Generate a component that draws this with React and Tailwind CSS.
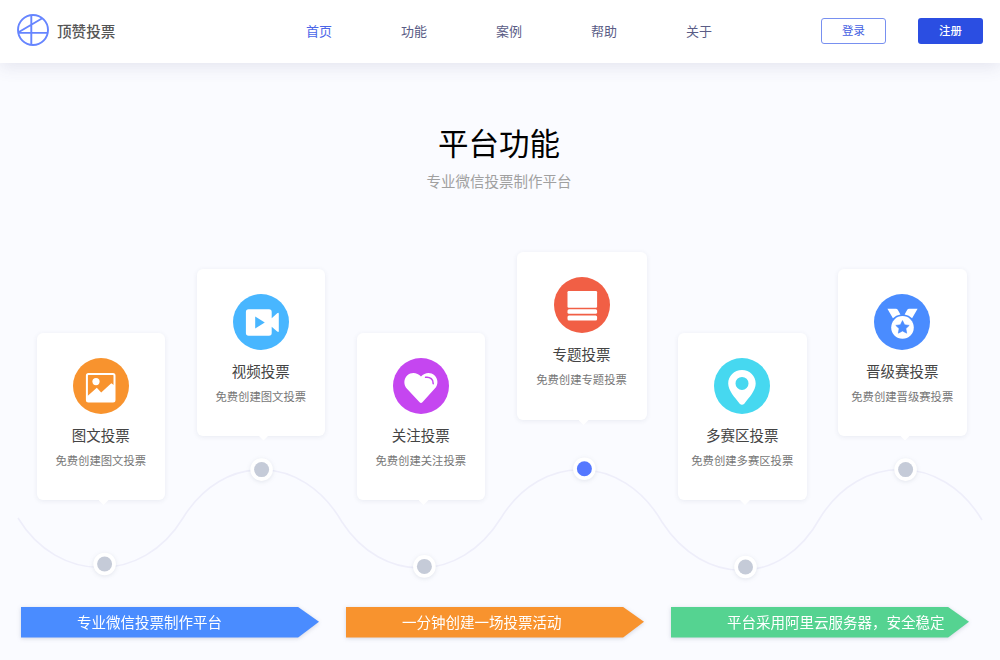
import React from 'react';

const navItems = ['首页', '功能', '案例', '帮助', '关于'];

const ImageIcon = () => (
  <g>
    <rect x="13.9" y="16" width="27.6" height="27.4" rx="1.5" fill="none" stroke="#fff" strokeWidth="2" />
    <circle cx="23" cy="23.6" r="3.6" fill="#fff" />
    <path d="M14 38.5 L23.8 29.8 L28.2 34.6 L38.3 25.3 L41.5 27.5 V43.4 H14 Z" fill="#fff" />
  </g>
);

const VideoIcon = () => (
  <g fill="#fff">
    <path fillRule="evenodd" d="M15.6 15.3 H36 Q38.7 15.3 38.7 18 V24.3 L44.2 19.2 Q45.8 18.2 45.8 20 V37 Q45.8 38.8 44.2 37.6 L38.7 32.8 V39 Q38.7 41.7 36 41.7 H15.6 Q12.9 41.7 12.9 39 V18 Q12.9 15.3 15.6 15.3 Z M22.2 22.6 V34.6 L31.8 28.6 Z" />
  </g>
);

const HeartIcon = () => (
  <g>
    <path d="M28 18.6 C31.6 14.2 37.6 13.8 41.4 17.2 C45.4 21 45.4 26.8 41.8 30.6 L29.4 44.2 Q28 45.8 26.6 44.2 L14.2 31 C10.4 27 10.4 21 14.4 17.2 C18.2 13.8 24.4 14.2 28 18.6 Z" fill="#fff" />
    <path d="M32.6 19.3 C37 18.6 40.6 21.4 40.2 25.6" fill="none" stroke="#c546f0" strokeWidth="1.6" strokeLinecap="round" />
  </g>
);

const TopicIcon = () => (
  <g fill="#fff">
    <rect x="13.5" y="14" width="29.6" height="16.8" rx="1.2" />
    <rect x="13.5" y="32.2" width="29.6" height="4.6" rx="1.5" />
    <rect x="13.5" y="38.6" width="29.6" height="4.8" rx="1.5" />
  </g>
);

const PinIcon = () => (
  <path
    fill="#fff"
    fillRule="evenodd"
    d="M28 12 C35.8 12 41.7 18 41.7 25.6 C41.7 32.6 35.2 39.6 30.3 45.7 Q28 48 25.7 45.7 C20.8 39.6 14.2 32.6 14.2 25.6 C14.2 18 20.2 12 28 12 Z M28 18.9 A6.5 6.5 0 1 0 28 31.9 A6.5 6.5 0 1 0 28 18.9 Z"
  />
);

const MedalIcon = () => (
  <g>
    <path d="M13.4 14.8 H21.8 Q23.2 14.8 23.9 16 L26.4 20.4 Q22 21.2 18.9 24.2 Z" fill="#fff" />
    <path d="M43.6 14.8 H35.2 Q33.8 14.8 33.1 16 L30.6 20.4 Q35 21.2 38.1 24.2 Z" fill="#fff" />
    <circle cx="28.5" cy="33.4" r="11.3" fill="#fff" />
    <path d="M28.5 26.6 L30.6 30.8 L35.2 31.4 L31.9 34.6 L32.7 39.2 L28.5 37 L24.3 39.2 L25.1 34.6 L21.8 31.4 L26.4 30.8 Z" fill="#4a8cff" stroke="#4a8cff" strokeWidth=".6" strokeLinejoin="round" />
  </g>
);

const features = [
  { title: '图文投票', desc: '免费创建图文投票', color: '#f8932e', icon: ImageIcon, box: 'mt-[81px] h-[167px] w-[128.5px]' },
  { title: '视频投票', desc: '免费创建图文投票', color: '#48b6ff', icon: VideoIcon, box: 'mt-[16.5px] h-[167px] w-[128.5px]' },
  { title: '关注投票', desc: '免费创建关注投票', color: '#c546f0', icon: HeartIcon, box: 'mt-[81px] h-[167px] w-[128.5px]' },
  { title: '专题投票', desc: '免费创建专题投票', color: '#f15f45', icon: TopicIcon, box: 'h-[168px] w-[130px]' },
  { title: '多赛区投票', desc: '免费创建多赛区投票', color: '#46d8f0', icon: PinIcon, box: 'mt-[81px] h-[167px] w-[128.5px]' },
  { title: '晋级赛投票', desc: '免费创建晋级赛投票', color: '#4a8cff', icon: MedalIcon, box: 'mt-[16.5px] h-[167px] w-[128.5px]' }
];

// dot centres on the wave, relative to the timeline area
const dots = [
  { x: 104.6, y: 312 },
  { x: 261.6, y: 217.6 },
  { x: 424.4, y: 314.4 },
  { x: 584.4, y: 216.8, active: true },
  { x: 745.5, y: 315 },
  { x: 905.6, y: 217.6 }
];

const banners = [
  { text: '专业微信投票制作平台', color: 'bg-[#4a8cff]' },
  { text: '一分钟创建一场投票活动', color: 'bg-[#f8932e]' },
  { text: '平台采用阿里云服务器，安全稳定', color: 'bg-[#55d391]' }
];

const Logo = () => (
  <div className="mb-1 flex w-[254.5px] items-center">
    <svg width="33" height="34" viewBox="0 0 33 34" fill="none" stroke="#6685ff" strokeWidth="1.9">
      <circle cx="16" cy="17" r="15" />
      <path d="M14.3 2 V32 M1.5 19.9 H31 M1.5 19.2 L25.3 5.2" />
    </svg>
    <span className="ml-[7px] mt-0.5 text-[14.6px] font-medium text-[#555]">顶赞投票</span>
  </div>
);

const FeatureCard = ({ item }) => {
  const Icon = item.icon;
  return (
    <div className={`relative flex shrink-0 flex-col items-center rounded-md bg-white pt-[25px] shadow-[0_1px_5px_rgba(60,70,110,0.09)] ${item.box}`}>
      <svg width="56" height="56" viewBox="0 0 56 56">
        <circle cx="28" cy="28" r="28" fill={item.color} />
        <Icon />
      </svg>
      <h3 className="mt-[10px] whitespace-nowrap text-[14.5px] leading-[22px] text-[#444]">{item.title}</h3>
      <p className="mt-[6px] whitespace-nowrap text-[11.35px] leading-4 text-[#777]">{item.desc}</p>
      <span className="absolute -bottom-[5px] left-[62px] h-[5px] w-[10px] bg-white [clip-path:polygon(0_0,100%_0,50%_100%)]" />
    </div>
  );
};

const Timeline = () => (
  <svg className="absolute left-0 top-0" width="1000" height="340" viewBox="0 0 1000 340">
    <path
      d="M18 266 C58 332 143 332 183 266 C223 201 302 201 342 270 C382 332 460 332 501 266 C541 201 622 201 662 270 C704 335 782 335 820 266 C860 201 942 201 982 268"
      fill="none"
      stroke="#eeeefa"
      strokeWidth="1.6"
    />
    {dots.map(d => (
      <g key={d.x}>
        <circle cx={d.x} cy={d.y} r="11.3" className="fill-white drop-shadow-[0_1px_2px_rgba(60,70,110,0.12)]" />
        <circle cx={d.x} cy={d.y} r="7.5" fill={d.active ? '#5578ff' : '#c5cbd8'} />
      </g>
    ))}
  </svg>
);

const App = () => {
  return (
    <div lang="zh-CN" className="h-[660px] w-[1000px] overflow-hidden bg-[#fafbff] font-['Noto_Sans_CJK_SC',sans-serif]">
      <header className="flex h-[63px] items-center bg-white pl-[17px] pr-[17px] shadow-[0_4px_16px_rgba(70,75,120,0.12)]">
        <Logo />
        <nav className="mb-[2px] flex">
          {navItems.map((item, i) => (
            <a key={item} href="#" className={`w-[95px] text-center text-[13px] ${i === 0 ? 'text-[#4b66e8]' : 'text-[#5a5c86]'}`}>{item}</a>
          ))}
        </nav>
        <div className="mb-[1px] ml-auto flex gap-8">
          <button className="h-[26px] w-[65px] rounded-[3px] border border-[#7890f0] text-[11.4px] text-[#4460e2]">登录</button>
          <button className="h-[26px] w-[65px] rounded-[3px] bg-[#2b4ee2] text-[11.4px] font-medium text-white">注册</button>
        </div>
      </header>

      <main>
        <div className="h-[189px] pt-[57px] pr-[2px] text-center">
          <h1 className="text-[30.5px] leading-[44px] text-black">平台功能</h1>
          <p className="mt-[6px] text-[14.5px] leading-[22px] text-[#a0a0a0]">专业微信投票制作平台</p>
        </div>

        <section className="relative h-[355px]">
          <Timeline />
          <div className="relative flex items-start justify-between pl-[36.5px] pr-[33.5px]">
            {features.map(item => <FeatureCard key={item.title} item={item} />)}
          </div>
        </section>

        <div className="flex gap-[27px] pl-[21px]">
          {banners.map(b => (
            <div key={b.text} className="shrink-0 drop-shadow-[0_1px_2px_rgba(60,70,110,0.2)]">
              <div className={`flex h-[30.5px] w-[298px] items-center whitespace-nowrap pl-[56px] text-[14.5px] text-white [clip-path:polygon(0_0,93%_0,100%_48%,93%_100%,0_100%)] ${b.color}`}>
                {b.text}
              </div>
            </div>
          ))}
        </div>
      </main>
    </div>
  );
};

export default App;
